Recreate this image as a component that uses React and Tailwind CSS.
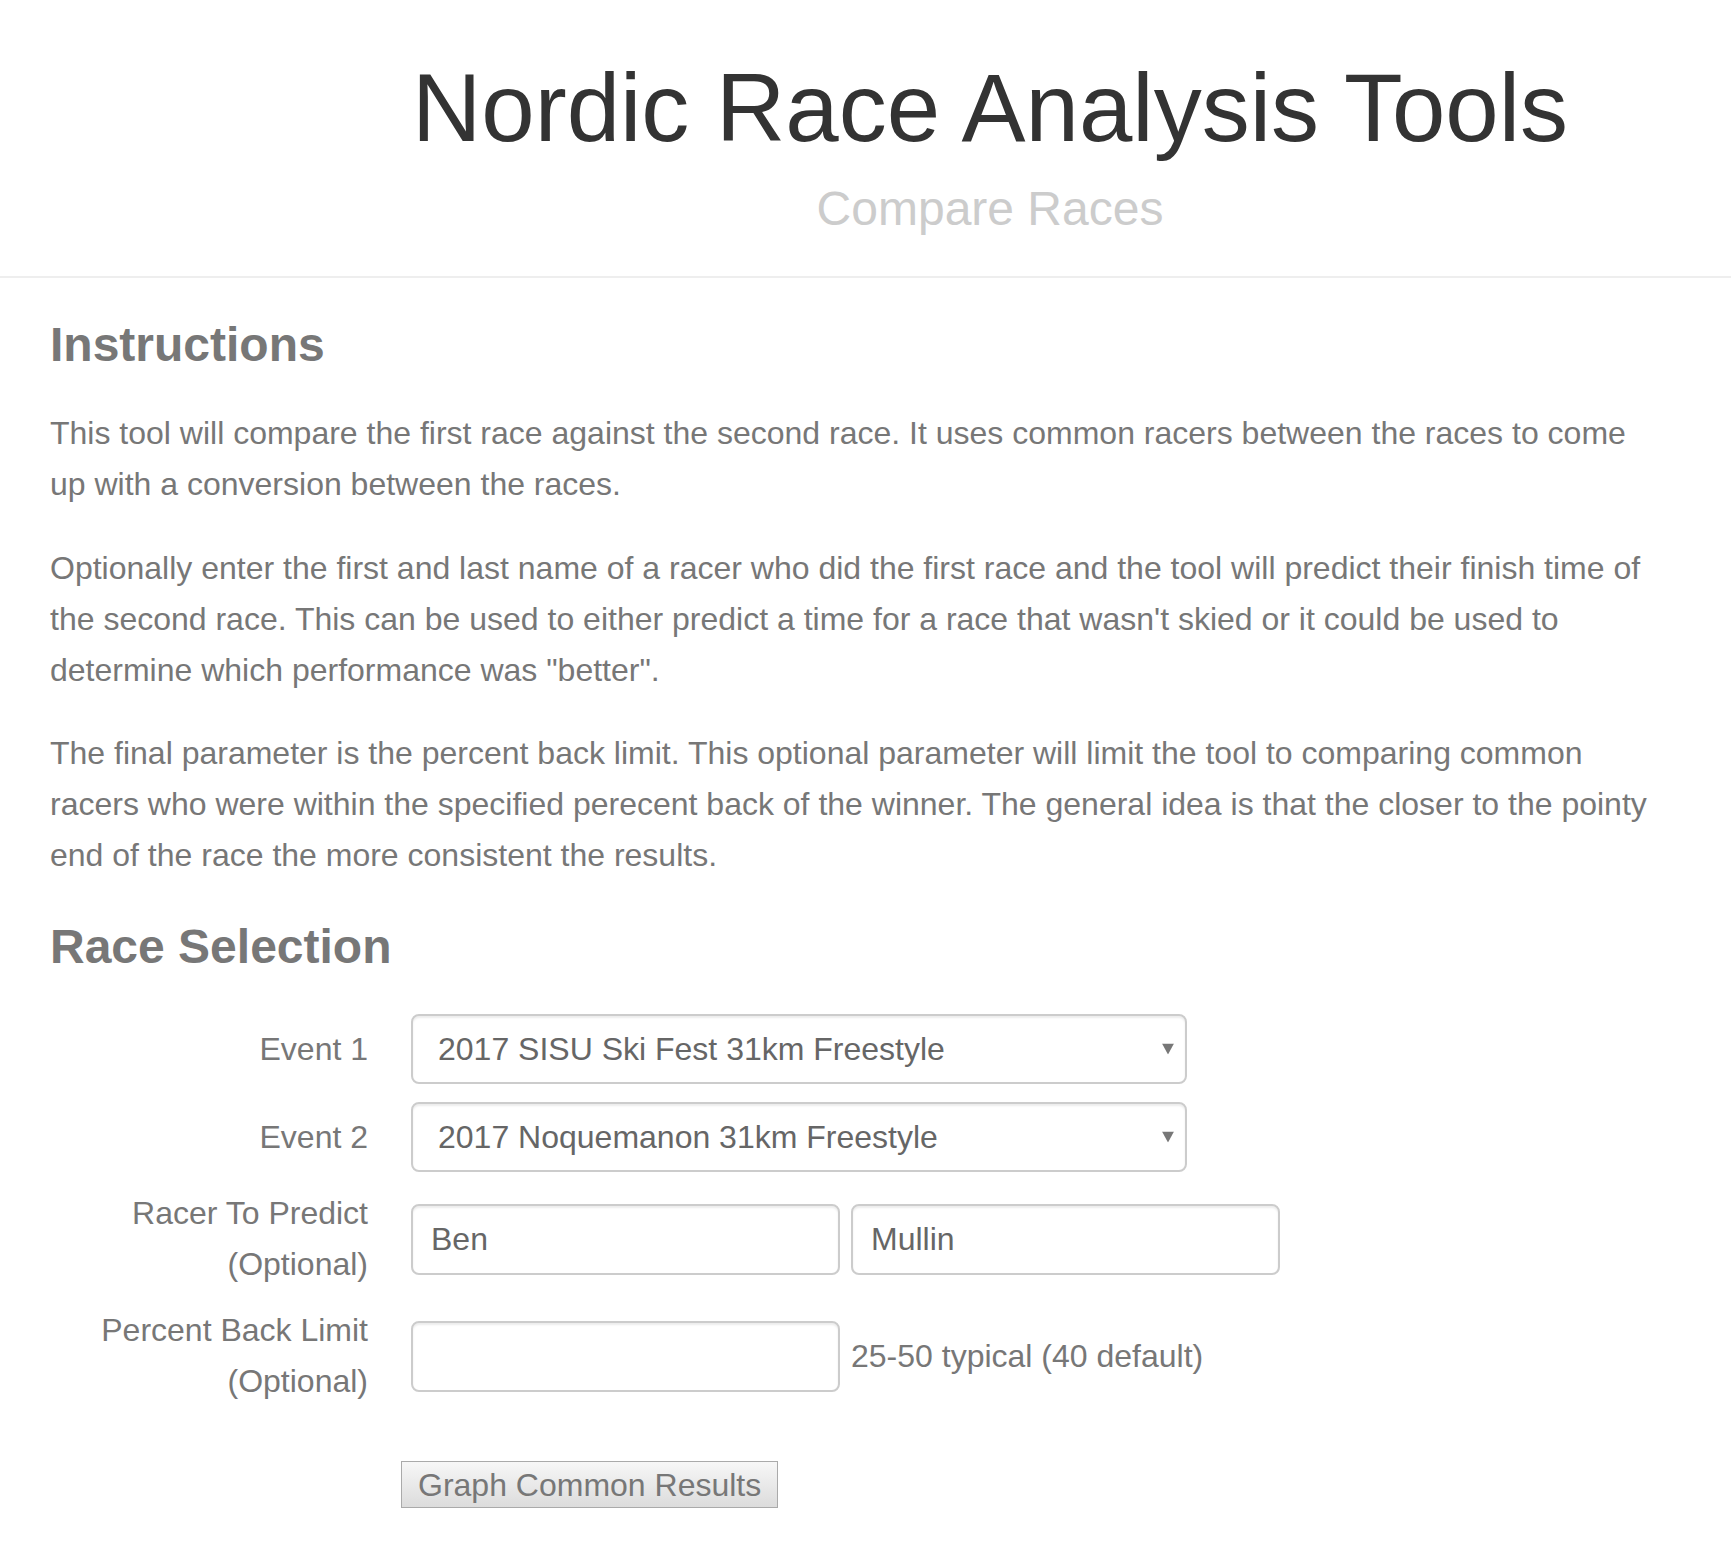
const events1 = ["2017 SISU Ski Fest 31km Freestyle", "2017 Noquemanon 31km Freestyle"];
const events2 = ["2017 Noquemanon 31km Freestyle", "2017 SISU Ski Fest 31km Freestyle"];

function Row({ label, className = "", children }) {
  return (
    <div className={`flex items-center ${className}`}>
      <label className="w-[318px] shrink-0 text-right text-[32px] leading-[51px] text-[#777]">{label}</label>
      <div className="ml-[43px] flex items-center">{children}</div>
    </div>
  );
}

function EventSelect({ options }) {
  return (
    <div className="relative">
      <select
        defaultValue={options[0]}
        className="block h-[70px] w-[776px] appearance-none rounded-[8px] border-2 border-[#ccc] bg-white pl-[25px] text-[32px] text-[#666] shadow-[inset_0_2px_2px_rgba(0,0,0,0.075)] outline-none"
      >
        {options.map((o) => (
          <option key={o}>{o}</option>
        ))}
      </select>
      <svg
        className="pointer-events-none absolute right-[13px] top-1/2 -translate-y-1/2"
        width="12"
        height="11"
        viewBox="0 0 12 11"
      >
        <polygon points="0,0 12,0 6,11" fill="#777" />
      </svg>
    </div>
  );
}

function TextInput({ value }) {
  return (
    <input
      type="text"
      defaultValue={value}
      className="block h-[71px] w-[429px] rounded-[8px] border-2 border-[#ccc] bg-white px-[18px] text-[32px] text-[#666] shadow-[inset_0_2px_2px_rgba(0,0,0,0.075)] outline-none"
    />
  );
}

export default function App() {
  return (
    <div className="min-h-screen bg-white font-['Liberation_Sans',Arial,sans-serif]">
      <header className="border-b-2 border-[#eee] pb-[38px] pl-[249px] pt-[56px] text-center">
        <h1 className="text-[96px] font-normal leading-[104px] text-[#333]">Nordic Race Analysis Tools</h1>
        <p className="mt-[20px] text-[48px] leading-[58px] text-[#ccc]">Compare Races</p>
      </header>

      <main className="pb-[50px] pl-[50px] pr-[71px] pt-[38px] text-[#777]">
        <h2 className="mb-[34px] text-[48px] font-bold leading-[58px]">Instructions</h2>
        <p className="mb-[33px] text-[32px] leading-[51px]">
          This tool will compare the first race against the second race. It uses common racers between the races to
          come up with a conversion between the races.
        </p>
        <p className="mb-[32px] text-[32px] leading-[51px]">
          Optionally enter the first and last name of a racer who did the first race and the tool will predict their
          finish time of the second race. This can be used to either predict a time for a race that wasn't skied or it
          could be used to determine which performance was "better".
        </p>
        <p className="mb-[37px] text-[32px] leading-[51px]">
          The final parameter is the percent back limit. This optional parameter will limit the tool to comparing
          common racers who were within the specified perecent back of the winner. The general idea is that the closer
          to the pointy end of the race the more consistent the results.
        </p>

        <h2 className="mb-[38px] text-[48px] font-bold leading-[58px]">Race Selection</h2>

        <form onSubmit={(e) => e.preventDefault()}>
          <Row label="Event 1">
            <EventSelect options={events1} />
          </Row>
          <Row label="Event 2" className="mt-[18px]">
            <EventSelect options={events2} />
          </Row>
          <Row
            label={
              <>
                Racer To Predict
                <br />
                (Optional)
              </>
            }
            className="mt-[16px]"
          >
            <TextInput value="Ben" />
            <div className="ml-[11px]">
              <TextInput value="Mullin" />
            </div>
          </Row>
          <Row
            label={
              <>
                Percent Back Limit
                <br />
                (Optional)
              </>
            }
            className="mt-[15px]"
          >
            <TextInput value="" />
            <span className="ml-[11px] text-[32px] leading-[51px] text-[#777]">25-50 typical (40 default)</span>
          </Row>

          <button
            type="submit"
            className="ml-[351px] mt-[54px] block h-[47px] border border-[#aaa] bg-linear-to-b from-[#f7f7f7] to-[#dcdcdc] px-4 text-[32px] leading-none text-[#777]"
          >
            Graph Common Results
          </button>
        </form>
      </main>
    </div>
  );
}
